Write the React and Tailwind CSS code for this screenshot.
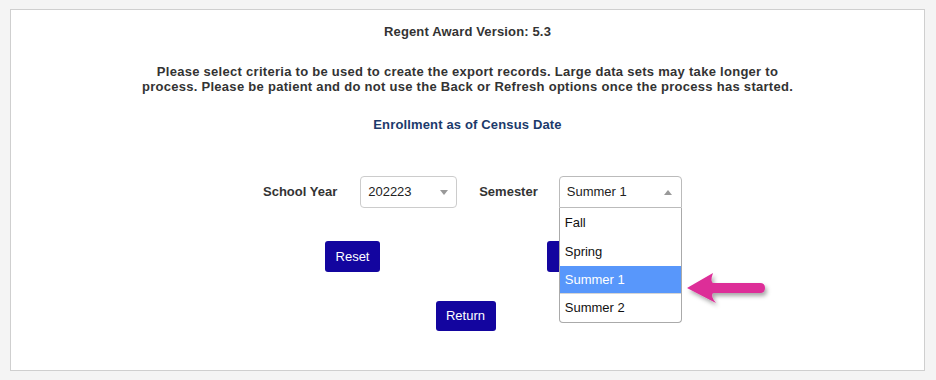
import React from "react";

function Caret({ up }) {
  return (
    <svg width="8" height="5" viewBox="0 0 8 5" className="shrink-0">
      {up ? <polygon points="0,5 8,5 4,0" fill="#999" /> : <polygon points="0,0 8,0 4,5" fill="#999" />}
    </svg>
  );
}

export default function App() {
  return (
    <div
      className="w-[936px] h-[380px] bg-[#f4f4f4] pt-[9px] pl-[10px] overflow-hidden"
      style={{ fontFamily: '"Liberation Sans", Arial, sans-serif' }}
    >
      <div className="relative w-[915px] h-[362px] bg-white border border-[#cfcfcf] flex flex-col items-center pt-[14px]">
        <div className="text-[13px] leading-[15px] font-bold text-[#333] tracking-[0.15px]">Regent Award Version: 5.3</div>
        <p className="mt-[25px] w-[674px] text-center text-[13px] leading-[15px] font-bold text-[#333] tracking-[0.28px]">
          Please select criteria to be used to create the export records. Large data sets may take longer to process. Please be patient and do not use the Back or Refresh options once the process has started.
        </p>
        <div className="mt-[23px] text-[13px] leading-[15px] font-bold text-[#1b3a6b] tracking-[0.15px]">Enrollment as of Census Date</div>

        <div className="mt-[44px] self-start ml-[252px] flex items-center h-[32px]">
          <span className="text-[13px] font-bold text-[#333]">School Year</span>
          <div className="ml-[23px] w-[97px] h-[32px] border border-[#cccccc] rounded-[4px] flex items-center justify-between pl-[7px] pr-[8px] text-[13px] text-[#222]">
            <span className="-mt-[1px]">202223</span>
            <Caret />
          </div>
          <span className="ml-[22px] text-[13px] font-bold text-[#333]">Semester</span>
          <div className="relative ml-[21px] w-[123px]">
            <div className="h-[32px] border border-[#bbbbbb] rounded-t-[4px] flex items-center justify-between pl-[7px] pr-[9px] text-[13px] text-[#222]">
              <span className="-mt-[1px]">Summer 1</span>
              <Caret up />
            </div>
            <div className="absolute left-0 top-[32px] w-[123px] bg-white border-x border-b border-[#aaaaaa] rounded-b-[4px] text-[13px] text-[#111] z-10">
              <div className="h-[29px] flex items-center pl-[5px]">Fall</div>
              <div className="h-[29px] flex items-center pl-[5px]">Spring</div>
              <div className="h-[28px] flex items-center pl-[5px] bg-[#5897fb] text-white border-b border-[#d5d5d5]">Summer 1</div>
              <div className="h-[28px] flex items-center pl-[5px]">Summer 2</div>
            </div>
          </div>
        </div>

        <div className="mt-[33px] flex gap-[167px] ml-[2px]">
          <button className="w-[55px] h-[31px] bg-[#13059f] text-white text-[13px] rounded-[3px]">Reset</button>
          <button className="w-[65px] h-[31px] bg-[#13059f] text-white text-[13px] rounded-[3px]">Submit</button>
        </div>

        <button className="mt-[29px] w-[60px] h-[30px] bg-[#13059f] text-white text-[13px] rounded-[3px] -ml-[4px]">Return</button>

        <svg className="absolute left-[664px] top-[252px]" width="100" height="50" viewBox="0 0 100 50">
          <defs>
            <filter id="sh" x="-20%" y="-30%" width="150%" height="180%">
              <feDropShadow dx="2" dy="3" stdDeviation="2" floodColor="#000" floodOpacity="0.35" />
            </filter>
          </defs>
          <g filter="url(#sh)">
            <path d="M12 26 L38 11 Q35 19 38 21 L85 21 Q90 21 90 26 Q90 31 85 31 L38 31 Q35 34 41 41 Z" fill="#dd2d98" />
          </g>
        </svg>
      </div>
    </div>
  );
}
